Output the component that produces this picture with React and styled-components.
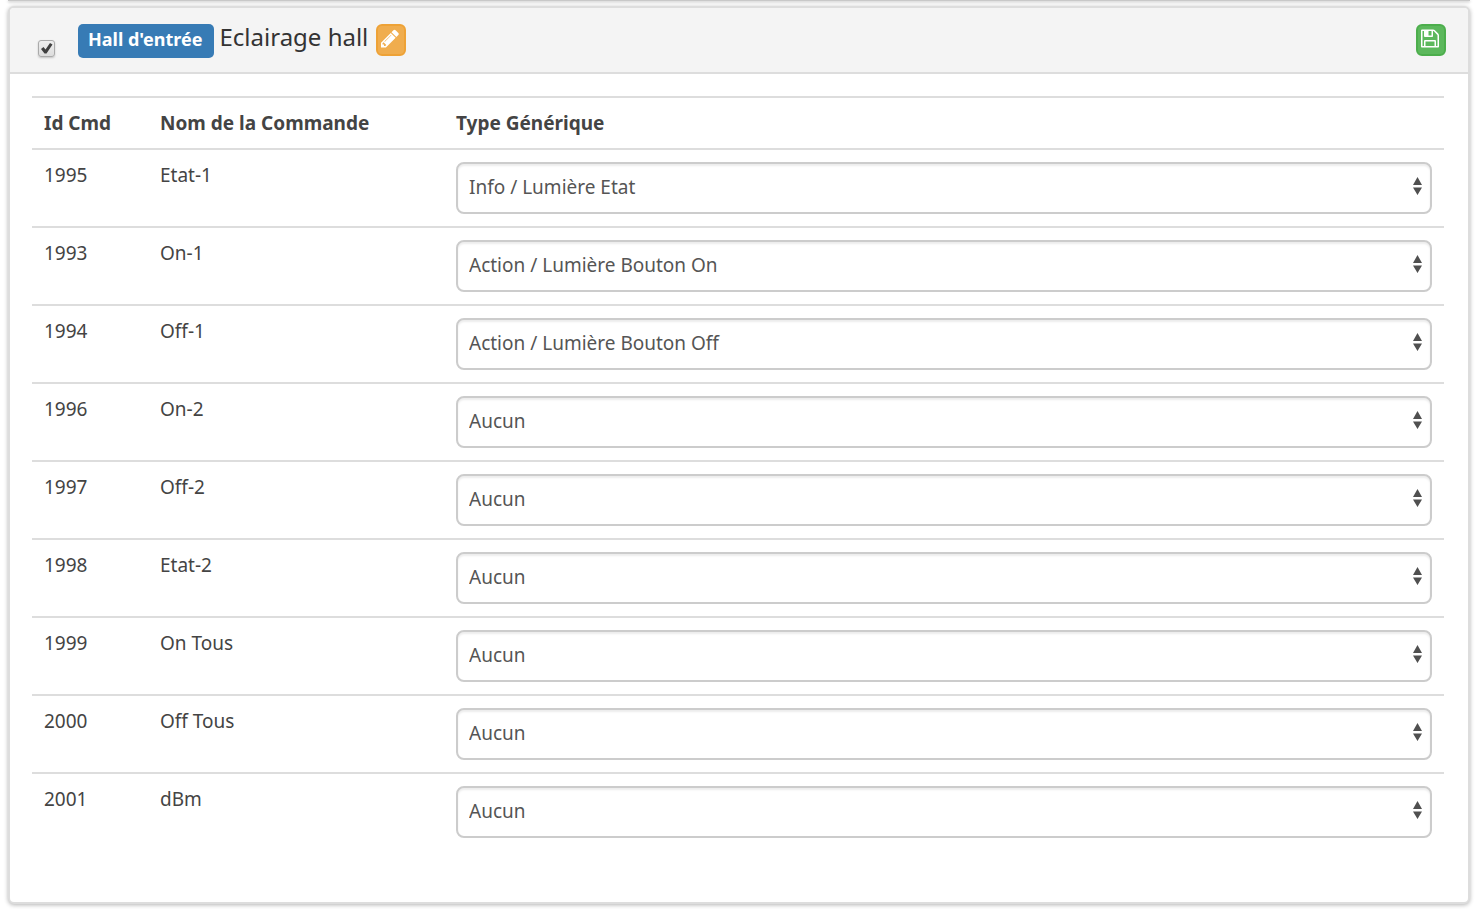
import React, { useState } from "react";
import styled, { createGlobalStyle } from "styled-components";

const GlobalStyle = createGlobalStyle`
  *, *::before, *::after { box-sizing: border-box; }
  body {
    margin: 0;
    background: #fff;
    color: #444;
    font-family: "Noto Sans", "Open Sans", sans-serif;
    font-size: 19px;
    line-height: 26px;
  }
`;

const Page = styled.main`
  display: flex;
  flex-direction: column;
  gap: 5px;
  padding: 0 10px 5px 8px;
`;

const PreviousPanel = styled.div`
  height: 1px;
  background: #c8c8c8;
  box-shadow: 0 1px 3px rgba(0, 0, 0, 0.4);
`;

const Panel = styled.section`
  border: 2px solid #ddd;
  border-radius: 6px;
  background: #fff;
  box-shadow: 0 1px 4px rgba(0, 0, 0, 0.3);
`;

const PanelHeader = styled.header`
  display: flex;
  align-items: flex-start;
  padding: 16px 22px 14px 28px;
  border-bottom: 2px solid #ddd;
  border-radius: 4px 4px 0 0;
  background: #f4f4f4;
`;

const Checkbox = styled.input`
  appearance: none;
  width: 17px;
  height: 17px;
  margin: 16px 23px 0 0;
  border: 1px solid #aaa;
  border-radius: 3px;
  background: linear-gradient(#eee, #ddd);
  box-shadow: 0 1px 2px rgba(0, 0, 0, 0.2);
`;

const CheckField = styled.label`
  display: grid;
  > * { grid-area: 1 / 1; }
`;

const CheckMark = styled.svg`
  width: 13px;
  height: 13px;
  margin: 18px 0 0 2px;
  fill: #404040;
  pointer-events: none;
  visibility: ${(p) => (p.$on ? "visible" : "hidden")};
`;

const Label = styled.span`
  height: 34px;
  padding: 0 12px 0 10px;
  border-radius: 5px;
  background: #377bb5;
  color: #fff;
  font-size: 18px;
  font-weight: 700;
  line-height: 30px;
`;

const Title = styled.h1`
  margin: 0 8px 0 5px;
  color: #333;
  font-size: 24px;
  font-weight: 400;
  line-height: 26px;
`;

const tones = {
  warning: ["#f0ad4e", "#eea236"],
  success: ["#5cb85c", "#4cae4c"],
};

const IconButton = styled.button`
  display: flex;
  align-items: flex-start;
  width: 30px;
  height: 32px;
  padding: 3px;
  margin-left: ${(p) => (p.$end ? "auto" : "0")};
  border: 2px solid ${(p) => tones[p.$tone][1]};
  border-radius: 6px;
  background: ${(p) => tones[p.$tone][0]};
  cursor: pointer;
  svg { width: 18px; height: 19px; fill: #fff; }
`;

const PanelBody = styled.div`
  padding: 22px 24px 52px 22px;
`;

const Table = styled.table`
  width: 100%;
  border-spacing: 0;
  table-layout: fixed;
`;

const HeadCell = styled.th`
  width: ${(p) => p.$width || "auto"};
  padding: 12px;
  border-top: 2px solid #ddd;
  font-weight: 700;
  text-align: left;
`;

const Cell = styled.td`
  padding: 12px;
  border-top: 2px solid #ddd;
  vertical-align: top;
`;

const SelectBox = styled.div`
  display: grid;
  align-items: center;
  > * { grid-area: 1 / 1; }
`;

const Select = styled.select`
  appearance: none;
  width: 100%;
  height: 52px;
  padding: 0 32px 2px 11px;
  border: 2px solid #ccc;
  border-radius: 8px;
  background: #fff;
  box-shadow: inset 0 2px 2px rgba(0, 0, 0, 0.075);
  color: #555;
  font: inherit;
`;

const Arrows = styled.svg`
  justify-self: end;
  width: 9px;
  height: 18px;
  margin: 0 10px 4px 0;
  fill: #505050;
  pointer-events: none;
`;

const options = [
  "Aucun",
  "Info / Lumière Etat",
  "Action / Lumière Bouton On",
  "Action / Lumière Bouton Off",
];

const commands = [
  { id: 1995, name: "Etat-1", type: options[1] },
  { id: 1993, name: "On-1", type: options[2] },
  { id: 1994, name: "Off-1", type: options[3] },
  { id: 1996, name: "On-2", type: options[0] },
  { id: 1997, name: "Off-2", type: options[0] },
  { id: 1998, name: "Etat-2", type: options[0] },
  { id: 1999, name: "On Tous", type: options[0] },
  { id: 2000, name: "Off Tous", type: options[0] },
  { id: 2001, name: "dBm", type: options[0] },
];

const PencilIcon = () => (
  <svg viewBox="128 128 1536 1536" aria-hidden="true">
    <path d="M491 1536l91-91-235-235-91 91v107h128v128h107zm523-928q0-22-22-22-10 0-17 7l-542 542q-7 7-7 17 0 22 22 22 10 0 17-7l542-542q7-7 7-17zm-54-192l416 416-832 832h-416v-416zm683 96q0 53-37 90l-166 166-416-416 166-165q36-38 90-38 53 0 91 38l235 234q37 39 37 91z" />
  </svg>
);

const FloppyIcon = () => (
  <svg viewBox="128 128 1536 1536" aria-hidden="true">
    <path d="M512 1536h768v-384h-768v384zm896 0h128v-896q0-14-10-38.5t-20-34.5l-281-281q-10-10-34-20t-39-10v416q0 40-28 68t-68 28h-576q-40 0-68-28t-28-68v-416h-128v1280h128v-416q0-40 28-68t68-28h832q40 0 68 28t28 68v416zm-384-928v-320q0-13-9.5-22.5t-22.5-9.5h-192q-13 0-22.5 9.5t-9.5 22.5v320q0 13 9.5 22.5t22.5 9.5h192q13 0 22.5-9.5t9.5-22.5zm640 32v928q0 40-28 68t-68 28h-1344q-40 0-68-28t-28-68v-1344q0-40 28-68t68-28h928q40 0 88 20t76 48l280 280q28 28 48 76t20 88z" />
  </svg>
);

function TypeSelect({ command }) {
  return (
    <SelectBox>
      <Select defaultValue={command.type} aria-label={`Type Générique ${command.name}`}>
        {options.map((o) => (
          <option key={o}>{o}</option>
        ))}
      </Select>
      <Arrows viewBox="0 0 9 18" aria-hidden="true">
        <path d="M4.500 0L9 8H0zM0 10.500H9L4.500 18z" />
      </Arrows>
    </SelectBox>
  );
}

export default function App() {
  const [checked, setChecked] = useState(true);
  return (
    <>
      <GlobalStyle />
      <Page>
        <PreviousPanel />
        <Panel>
          <PanelHeader>
            <CheckField>
              <Checkbox
                type="checkbox"
                aria-label="Eclairage hall"
                checked={checked}
                onChange={(e) => setChecked(e.target.checked)}
              />
              <CheckMark $on={checked} viewBox="0 0 13 13" aria-hidden="true">
                <path d="M1 7L3.500 5 5.500 7.500 10 1 12.500 2.500 6.500 11.500H4.500z" />
              </CheckMark>
            </CheckField>
            <Label>Hall d'entrée</Label>
            <Title>Eclairage hall</Title>
            <IconButton $tone="warning" type="button" aria-label="Modifier">
              <PencilIcon />
            </IconButton>
            <IconButton $tone="success" $end type="button" aria-label="Sauvegarder">
              <FloppyIcon />
            </IconButton>
          </PanelHeader>
          <PanelBody>
            <Table>
              <thead>
                <tr>
                  <HeadCell $width="116px">Id Cmd</HeadCell>
                  <HeadCell $width="296px">Nom de la Commande</HeadCell>
                  <HeadCell>Type Générique</HeadCell>
                </tr>
              </thead>
              <tbody>
                {commands.map((c) => (
                  <tr key={c.id}>
                    <Cell>{c.id}</Cell>
                    <Cell>{c.name}</Cell>
                    <Cell>
                      <TypeSelect command={c} />
                    </Cell>
                  </tr>
                ))}
              </tbody>
            </Table>
          </PanelBody>
        </Panel>
      </Page>
    </>
  );
}
